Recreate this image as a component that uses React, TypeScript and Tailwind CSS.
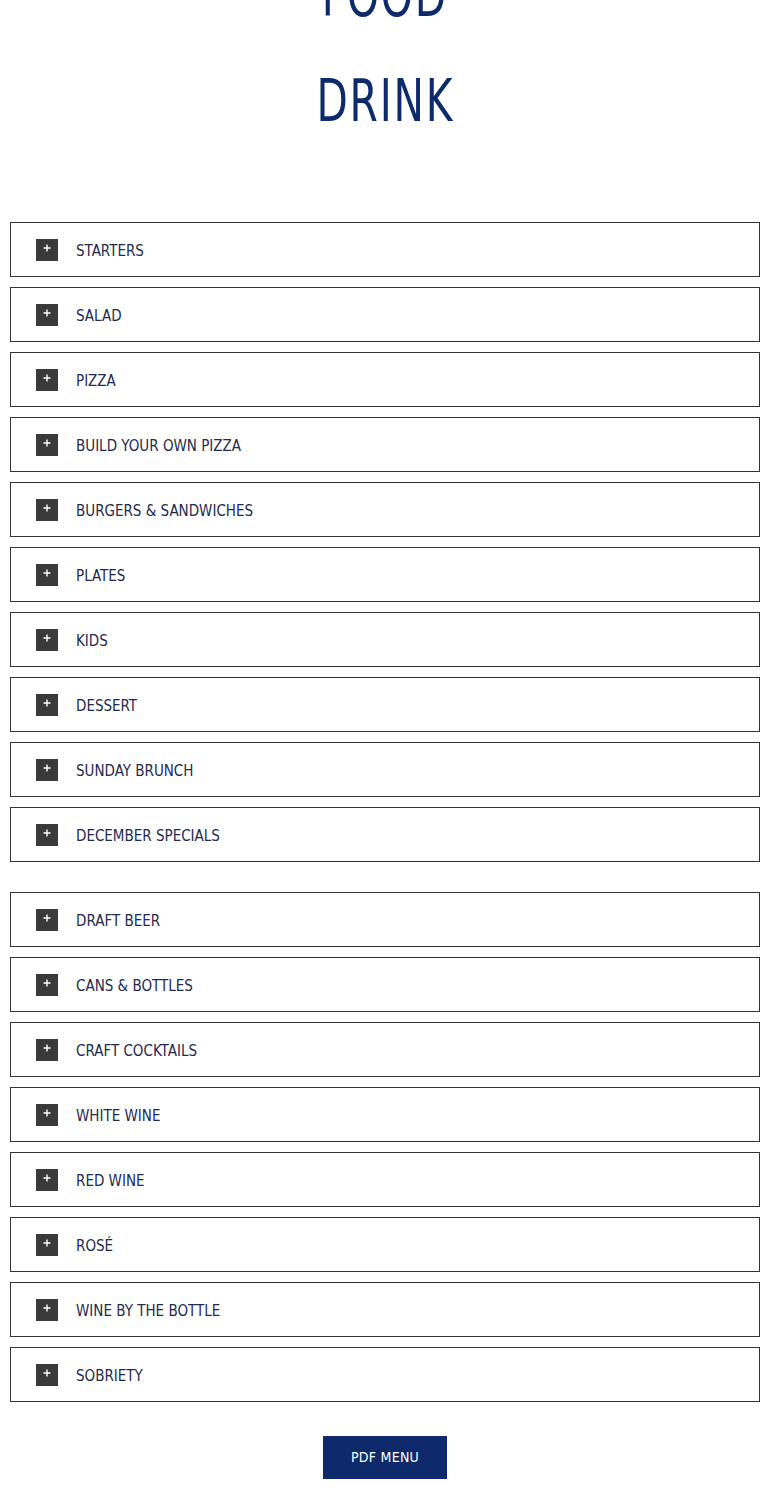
import { useState } from 'react';

const food = [
  'Starters',
  'Salad',
  'Pizza',
  'Build Your Own Pizza',
  'Burgers & Sandwiches',
  'Plates',
  'Kids',
  'Dessert',
  'Sunday Brunch',
  'December Specials',
];

const drink = [
  'Draft Beer',
  'Cans & Bottles',
  'Craft Cocktails',
  'White Wine',
  'Red Wine',
  'Rosé',
  'Wine by the Bottle',
  'Sobriety',
];

const font = 'font-["Liberation_Sans_Narrow","DejaVu_Sans_Condensed",sans-serif]';

function Item({ title }: { title: string }) {
  const [open, setOpen] = useState(false);
  return (
    <div className="border border-[#333] bg-white">
      <button
        onClick={() => setOpen(!open)}
        className="w-full h-[53px] flex items-center pl-[25px] text-left"
      >
        <span className="w-[22px] h-[22px] bg-[#3a3a3a] flex items-center justify-center flex-shrink-0">
          <svg width="8" height="8" viewBox="0 0 8 8" className="-mt-[3px]">
            <path d="M4 0.5v7M0.5 4h7" stroke="#fff" strokeWidth="1.4" />
          </svg>
        </span>
        <span className={`ml-[18px] pt-[3px] text-[15px] uppercase tracking-[0em] text-[#232a4e] ${font}`}>
          {title}
        </span>
      </button>
    </div>
  );
}

export default function App() {
  return (
    <div className="bg-white w-[770px] min-h-[1503px] overflow-hidden">
      <div className={`flex flex-col items-center text-[#0d2a6b] text-[58px] leading-none tracking-[0.04em] ${font}`}>
        <h1 className="-mt-[33px] h-[42px] scale-x-[0.78]">FOOD</h1>
        <h1 className="mt-[63px] scale-x-[0.78]">DRINK</h1>
      </div>
      <div className="px-[10px] mt-[92px] flex flex-col gap-[10px]">
        {food.map((t) => (
          <Item key={t} title={t} />
        ))}
      </div>
      <div className="px-[10px] mt-[30px] flex flex-col gap-[10px]">
        {drink.map((t) => (
          <Item key={t} title={t} />
        ))}
      </div>
      <div className="flex justify-center mt-[34px]">
        <button className={`w-[124px] h-[43px] bg-[#0e2a6a] text-white text-[14px] tracking-[0.02em] ${font}`}>
          PDF MENU
        </button>
      </div>
    </div>
  );
}
